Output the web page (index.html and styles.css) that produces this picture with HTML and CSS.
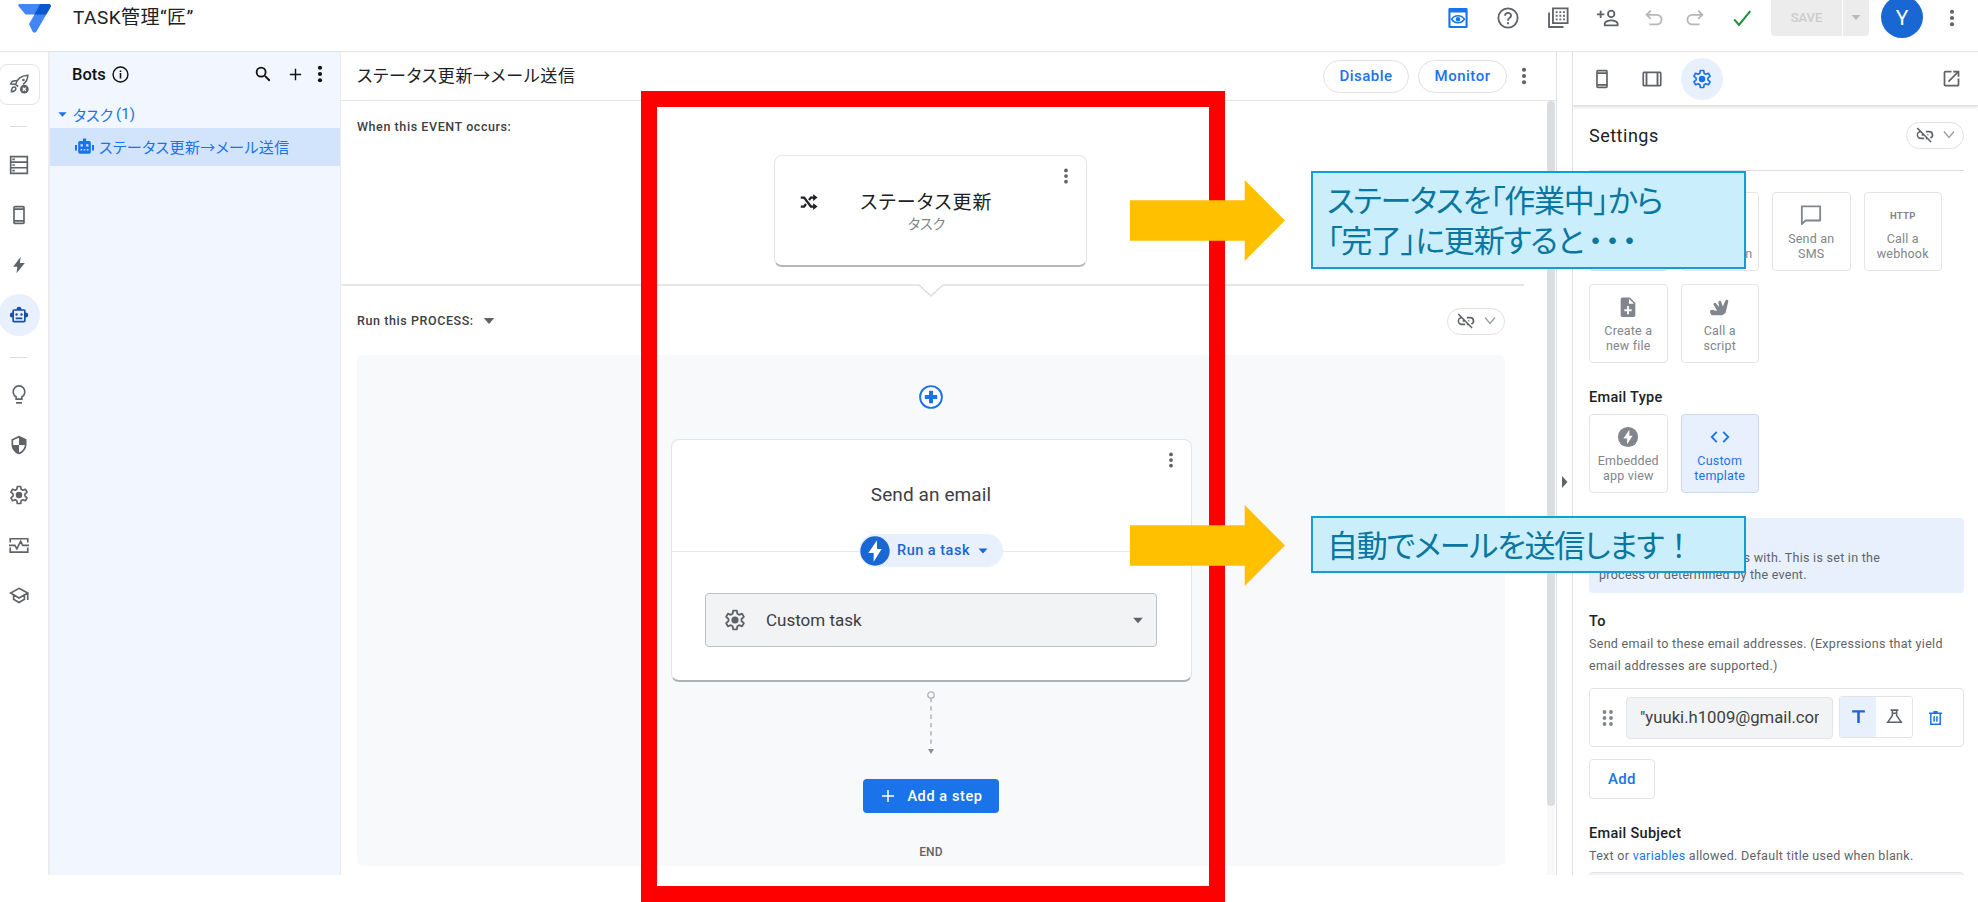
FILE: index.html
```html
<!DOCTYPE html>
<html lang="ja">
<head>
  <meta charset="UTF-8" />
  <meta name="viewport" content="width=device-width, initial-scale=1.0"/>
  <title>TASK管理“匠”</title>
  <link rel="stylesheet" href="styles.css">
</head>
<body>
  <!-- Icon sprite -->
  <svg class="sprite" xmlns="http://www.w3.org/2000/svg">
    <symbol id="more" viewBox="0 0 24 24"><circle cx="12" cy="4.5" r="2.5"/><circle cx="12" cy="12" r="2.5"/><circle cx="12" cy="19.5" r="2.5"/></symbol>
    <symbol id="gear" viewBox="0 0 24 24"><path fill="none" stroke="currentColor" stroke-width="2" stroke-linejoin="round" d="M10 1.800h4l.6 3.400 1.900 1.100 3.200-1.200 2 3.500-2.600 2.300v2.200l2.600 2.300-2 3.500-3.200-1.200-1.900 1.100-.6 3.400h-4l-.6-3.400-1.900-1.100-3.200 1.200-2-3.500 2.600-2.300v-2.200L2.300 8.600l2-3.500 3.200 1.200 1.900-1.100z"/><circle cx="12" cy="12" r="3.900"/></symbol>
    <symbol id="phone" viewBox="0 0 24 24"><path d="M17 1H7a2 2 0 0 0-2 2v18c0 1.100.9 2 2 2h10a2 2 0 0 0 2-2V3a2 2 0 0 0-2-2zM7 3h10v1H7zm10 15H7V6h10zM7 21v-1h10v1z"/></symbol>
    <symbol id="bolt" viewBox="0 0 24 24"><path d="M14 2 5 14h5l-1 8 10-12.500h-6z"/></symbol>
    <symbol id="bot" viewBox="0 0 24 24"><path d="M20 9V7a2 2 0 0 0-2-2h-3a3 3 0 0 0-6 0H6a2 2 0 0 0-2 2v2a3 3 0 0 0 0 6v4c0 1.100.9 2 2 2h12a2 2 0 0 0 2-2v-4a3 3 0 0 0 0-6zm-2 10H6V7h12zM9 13a1.500 1.500 0 1 1 0-3 1.500 1.500 0 0 1 0 3zm6 0a1.500 1.500 0 1 1 0-3 1.500 1.500 0 0 1 0 3zm-7 2h8v2H8z"/></symbol>
    <symbol id="bot-fill" viewBox="0 0 24 24"><path fill-rule="evenodd" d="M20 9V7a2 2 0 0 0-2-2h-4V2h-4v3H6a2 2 0 0 0-2 2v12c0 1.100.9 2 2 2h12a2 2 0 0 0 2-2zM7 9h3v3H7zm7 0h3v3h-3zm-7 6h2v2H7zm4 0h2v2h-2zm4 0h2v2h-2zM0 10h2.500v7H0zM21.500 10H24v7h-2.500z"/></symbol>
    <symbol id="unlink" viewBox="0 0 24 24"><path d="M17 7h-4v1.900h4a3.100 3.100 0 0 1 .7 6.100l1.500 1.500A5 5 0 0 0 17 7zm-1 4h-2.200l2 2h.2zM2 4.300l3.100 3.100A5 5 0 0 0 7 17h4v-1.900H7a3.100 3.100 0 0 1-.3-6.200L8.700 11H8v2h2.700l2.300 2.300V17h1.700l4 4 1.300-1.300L3.400 3z"/></symbol>
    <symbol id="chev" viewBox="0 0 24 24"><path fill="none" stroke="currentColor" stroke-width="2.800" d="m2 5 10 12L22 5"/></symbol>
    <symbol id="plus" viewBox="0 0 24 24"><path d="M20 13h-7v7h-2v-7H4v-2h7V4h2v7h7z"/></symbol>
    <symbol id="offbolt" viewBox="0 0 24 24"><circle cx="12" cy="12" r="11"/><path fill="#fff" d="M13.500 4 7 13.500h4V20l6-9.500h-3.500z"/></symbol>
    <symbol id="undo" viewBox="0 0 24 24"><path fill="none" stroke="currentColor" stroke-width="2" d="M8.500 4 4 8.500 8.500 13M4.500 8.500H15a5 5 0 0 1 0 10.500H7"/></symbol>
    <symbol id="drop" viewBox="0 0 24 24"><path d="M3 7h18l-9 10z"/></symbol>
  </svg>

  <header class="topbar">
    <svg class="logo" viewBox="0 0 33 29"><path fill="#4285f4" d="M1.500 0H31a2 2 0 0 1 1.700 2.800L18.500 27.600a2.300 2.300 0 0 1-4 0L11 20l5.500-9.500H7.500L.4 2A1.300 1.300 0 0 1 1.500 0z"/><path fill="#0b57d0" d="M22 0h9a2 2 0 0 1 1.700 2.800L28.300 10.500H16.500z"/></svg>
    <div class="app-name">TASK管理“匠”</div>
    <div class="tools">
      <svg class="blue tool" viewBox="0 0 24 24"><path fill-rule="evenodd" d="M3 1h18a1.500 1.500 0 0 1 1.500 1.500v19A1.500 1.500 0 0 1 21 23H3a1.500 1.500 0 0 1-1.500-1.500v-19A1.500 1.500 0 0 1 3 1zm.8 5v14.700h16.400V6z"/><path fill="none" stroke="currentColor" stroke-width="1.700" d="M5 13.300c3-5.100 11-5.100 14 0-3 5.100-11 5.100-14 0z"/><circle cx="12" cy="13.300" r="2.500"/></svg>
      <svg class="tool" viewBox="0 0 24 24"><circle cx="12" cy="12" r="10.500" fill="none" stroke="currentColor" stroke-width="2"/><path fill="none" stroke="currentColor" stroke-width="2.100" d="M8.800 9.500c0-4.300 6.600-4 6.500 0 0 2.200-3.300 2.600-3.300 5.400M12 16.500v2.200"/></svg>
      <svg class="tool" viewBox="0 0 24 24"><path fill="none" stroke="currentColor" stroke-width="2" d="M6.500 1.500h16v16h-16zM2.200 6v15.800H18"/><path fill="none" stroke="currentColor" stroke-width="2" stroke-dasharray="2 2" d="M9.500 5.500h11M9.500 9.500h11M9.500 13.500h11"/></svg>
      <svg class="tool" viewBox="0 0 24 24"><path d="M15.500 12a4.500 4.500 0 1 0 0-9 4.500 4.500 0 0 0 0 9zm0-7a2.500 2.500 0 1 1 0 5 2.500 2.500 0 0 1 0-5zm0 8.500c-3 0-8 1.500-8 4.500v3h16v-3c0-3-5-4.500-8-4.500zm-6 5.500v-1c.4-1.200 3.200-2.500 6-2.500s5.600 1.300 6 2.500v1zM5 12V9h3V7H5V4H3v3H0v2h3v3z"/></svg>
      <svg class="tool faded undo"><use href="#undo"/></svg>
      <svg class="tool faded redo"><use href="#undo"/></svg>
      <svg class="tool green" viewBox="0 0 24 24"><path fill="none" stroke="currentColor" stroke-width="2.200" d="m3.500 13.500 5.200 6L21 4.500"/></svg>
    </div>
    <div class="save"><span>SAVE</span><span class="save-drop"><svg><use href="#drop"/></svg></span></div>
    <div class="avatar">Y</div>
    <svg class="dots"><use href="#more"/></svg>
  </header>

  <div class="workspace">
    <nav class="rail">
      <div class="rail-box"><svg viewBox="0 0 24 24"><g fill="none" stroke="currentColor" stroke-width="1.800"><path d="M7.500 13C9 7 14 3 21.500 2.500 21.500 7 19.500 10.500 16 13M7.500 13l3 2.500M9 8.500l-5 .8-2 3.200 5.500.5"/><path d="M2.800 21.500c0-3 .5-5.500 3-5.500s2.800 3 .5 4.300c-1 .7-2.200 1-3.500 1.200z"/></g><circle cx="16.500" cy="8" r="1.500"/><circle cx="17.500" cy="18.500" r="5"/><path stroke="#fff" stroke-width="1.500" d="m15.700 16.700 3.600 3.600m0-3.600-3.600 3.600"/></svg></div>
      <hr>
      <div class="rail-item"><svg viewBox="0 0 24 24"><path fill="none" stroke="currentColor" stroke-width="2" d="M2 2h20v20H2zM2 8.600h20M2 15.300h20M4 5.300h3M4 12h3M4 18.700h3"/></svg></div>
      <div class="rail-item"><svg><use href="#phone"/></svg></div>
      <div class="rail-item"><svg><use href="#bolt"/></svg></div>
      <div class="rail-item active"><svg><use href="#bot"/></svg></div>
      <hr class="second">
      <div class="rail-item"><svg viewBox="0 0 24 24"><path fill="none" stroke="currentColor" stroke-width="2" d="M8.500 17v-2.800a7 7 0 1 1 7 0V17zM8.500 21.500h7"/></svg></div>
      <div class="rail-item"><svg viewBox="0 0 24 24"><path d="M12 1 3 5v6c0 5.600 3.800 10.700 9 12 5.200-1.300 9-6.400 9-12V5zm0 2.200V12h7c-.5 4.100-3.300 7.800-7 8.900V12H5V6.300z"/></svg></div>
      <div class="rail-item"><svg><use href="#gear"/></svg></div>
      <div class="rail-item"><svg viewBox="0 0 24 24"><path fill="none" stroke="currentColor" stroke-width="2" d="M1.500 9V4.500h21V9M1.500 15v5.500h21V15M0 12.500h7l2.500 4L14 7.500l2.500 5H24"/></svg></div>
      <div class="rail-item"><svg viewBox="0 0 24 24"><path fill="none" stroke="currentColor" stroke-width="2" d="m12 4 10.500 5.500L12 15.500 2 9.500zM5.500 12v5.200L12 21l6.500-3.800V12M22.500 9.500V18"/></svg></div>
    </nav>

    <aside class="bots">
      <div class="bots-head">
        <span>Bots</span>
        <svg class="info" viewBox="0 0 24 24"><circle cx="12" cy="12" r="10.500" fill="none" stroke="currentColor" stroke-width="2"/><path d="M10.900 10h2.200v7.500h-2.200zM10.900 6.200h2.200v2.300h-2.200z"/></svg>
        <svg class="search" viewBox="0 0 24 24"><path fill="none" stroke="currentColor" stroke-width="2.600" d="M14.500 14.500 21 21"/><circle cx="9.500" cy="9.500" r="6" fill="none" stroke="currentColor" stroke-width="2.400"/></svg>
        <svg class="add"><use href="#plus"/></svg>
        <svg class="dots"><use href="#more"/></svg>
      </div>
      <div class="group"><svg><use href="#drop"/></svg><span>タスク</span>(1)</div>
      <div class="bot-row"><svg><use href="#bot-fill"/></svg><span>ステータス更新→メール送信</span></div>
    </aside>

    <main class="editor">
      <div class="editor-head">
        <h1>ステータス更新→メール送信</h1>
        <button class="pill disable">Disable</button>
        <button class="pill">Monitor</button>
        <svg class="dots"><use href="#more"/></svg>
      </div>
      <div class="editor-body">
        <div class="flow">
          <section class="event">
            <div class="label">When this EVENT occurs:</div>
            <div class="event-card">
              <svg class="shuffle" viewBox="0 0 24 24"><path fill="none" stroke="currentColor" stroke-width="3" d="M1 6h4.500l9 12H19M1 18h4.500l2.500-3.300M12 9.300 14.500 6H19"/><path d="m17.500 1.500 6 4.500-6 4.500zM17.500 13.500l6 4.500-6 4.500z"/></svg>
              <div class="event-text">
                <div class="event-title">ステータス更新</div>
                <div class="event-sub">タスク</div>
              </div>
              <svg class="dots"><use href="#more"/></svg>
            </div>
            <svg class="notch" viewBox="0 0 1183 14"><path fill="none" stroke="#dcdee1" stroke-width="1.500" d="M0 1h578l12 11 12-11h581"/></svg>
          </section>
          <div class="process-head">
            <div class="label">Run this PROCESS:</div>
            <svg class="caret"><use href="#drop"/></svg>
            <div class="link-pill"><svg><use href="#unlink"/></svg><svg class="chev"><use href="#chev"/></svg></div>
          </div>
          <section class="process">
            <svg class="insert" viewBox="0 0 24 24"><circle cx="12" cy="12" r="10.900" fill="#fff" stroke="currentColor" stroke-width="1.900"/><path d="M10 5.800h4V10h4.200v4H14v4.200h-4V14H5.800v-4H10z"/></svg>
            <div class="step-card">
              <svg class="dots"><use href="#more"/></svg>
              <div class="step-title">Send an email</div>
              <div class="step-type">
                <div class="run"><svg class="run-icon"><use href="#offbolt"/></svg>Run a task<svg class="run-drop"><use href="#drop"/></svg></div>
              </div>
              <div class="select"><svg class="select-gear"><use href="#gear"/></svg>Custom task<svg class="select-drop"><use href="#drop"/></svg></div>
            </div>
            <svg class="connector" viewBox="0 0 12 66"><circle cx="6" cy="5" r="3.200" fill="none" stroke="#b0b3b7" stroke-width="1.300"/><path stroke="#b0b3b7" stroke-width="1.500" stroke-dasharray="4.300 4" d="M6 8v50"/><path fill="#8a8d91" d="M3 59h6l-3 5z"/></svg>
            <button class="add-step"><svg><use href="#plus"/></svg>Add a step</button>
            <div class="end">END</div>
          </section>
        </div>
        <div class="scroll"><div class="thumb"></div></div>
      </div>
    </main>

    <div class="splitter"><svg viewBox="0 0 6 12"><path d="M0 0v12l5.500-6z"/></svg></div>

    <aside class="side">
      <div class="side-tabs">
        <div class="tab"><svg><use href="#phone"/></svg></div>
        <div class="tab"><svg viewBox="0 0 24 24"><path fill-rule="evenodd" d="M2.500 3h19A2 2 0 0 1 23.500 5v14a2 2 0 0 1-2 2h-19a2 2 0 0 1-2-2V5a2 2 0 0 1 2-2zM6.500 5v14h11V5zM2.500 5v14h1.800V5zM19.700 5v14h1.800V5z"/></svg></div>
        <div class="tab on"><svg><use href="#gear"/></svg></div>
        <svg class="open" viewBox="0 0 24 24"><path d="M19 19H5V5h7V3H5a2 2 0 0 0-2 2v14c0 1.100.9 2 2 2h14a2 2 0 0 0 2-2v-7h-2zM14 3v2h3.600l-9.800 9.800 1.400 1.400L19 6.400V10h2V3z"/></svg>
      </div>
      <div class="side-body">
        <div class="settings-head">
          <h2>Settings</h2>
          <div class="link-pill"><svg><use href="#unlink"/></svg><svg class="chev"><use href="#chev"/></svg></div>
        </div>
        <div class="tiles">
          <div class="tile on"></div>
          <div class="tile"><i></i><br>notification</div>
          <div class="tile"><svg viewBox="0 0 24 24"><path fill="none" stroke="currentColor" stroke-width="2" stroke-linejoin="round" d="M2 2.500h20v15.500H6l-4 4z"/></svg>Send an<br>SMS</div>
          <div class="tile"><b>HTTP</b>Call a<br>webhook</div>
          <div class="tile"><svg viewBox="0 0 24 24"><path fill-rule="evenodd" d="M6 1.500h8l6 6V21a2 2 0 0 1-2 2H6a2 2 0 0 1-2-2V3.500a2 2 0 0 1 2-2zM13 3v5.500h5.500zM11 11v3.500H8v2h3V20h2v-3.500h3v-2h-3V11z"/></svg>Create a<br>new file</div>
          <div class="tile"><svg viewBox="0 0 24 24"><path d="M3 15.500 9 16 5 9.500a1.600 1.600 0 0 1 2.600-1.700L11 12l-.8-5.500a1.600 1.600 0 0 1 3-.6l1.800 5.600L18 5a1.600 1.600 0 0 1 3 1l-1.500 6.500-1.500 6-3.500 2.500H4a2 2 0 0 1-1.500-3.300z"/><circle cx="3.500" cy="17.500" r="2.500"/></svg>Call a<br>script</div>
        </div>
        <h3 class="type-title">Email Type</h3>
        <div class="tiles">
          <div class="tile"><svg><use href="#offbolt"/></svg>Embedded<br>app view</div>
          <div class="tile on"><svg viewBox="0 0 24 24"><path fill="none" stroke="currentColor" stroke-width="2" d="M8.500 6.500 3 12l5.500 5.500M15.500 6.500 21 12l-5.500 5.500"/></svg>Custom<br>template</div>
        </div>
        <div class="note"><p>The table this event starts with. This is set in the<br>process or determined by the event.</p></div>
        <h3>To</h3>
        <p class="help">Send email to these email addresses. (Expressions that yield email addresses are supported.)</p>
        <div class="address">
          <svg class="drag" viewBox="0 0 12 18"><circle cx="2.500" cy="3" r="1.900"/><circle cx="9" cy="3" r="1.900"/><circle cx="2.500" cy="9" r="1.900"/><circle cx="9" cy="9" r="1.900"/><circle cx="2.500" cy="15" r="1.900"/><circle cx="9" cy="15" r="1.900"/></svg>
          <div class="field"><span>"yuuki.h1009@gmail.com"</span></div>
          <div class="mode"><div class="on"><svg viewBox="0 0 24 24"><path d="M3 3h18v3.400h-7.200V21h-3.600V6.400H3z"/></svg></div><div><svg viewBox="0 0 24 24"><path fill="none" stroke="currentColor" stroke-width="2.200" d="M6.500 3h11M9 3v7.500L2.500 20h19L15 10.500V3M9 7.500h6"/></svg></div></div>
          <svg class="trash" viewBox="0 0 24 24"><path fill="none" stroke="currentColor" stroke-width="2.400" d="M4.500 5v17h15V5M1.500 4.500h21M8.500 2h7M9.800 9v9M14.200 9v9"/></svg>
        </div>
        <button class="add-address">Add</button>
        <h3>Email Subject</h3>
        <p class="help">Text or <a>variables</a> allowed. Default title used when blank.</p>
        <div class="subject"></div>
      </div>
    </aside>
  </div>

  <!-- Annotations on top of the editor -->
  <div class="frame"></div>
  <div class="arrow arrow-1"></div>
  <div class="arrow arrow-2"></div>
  <div class="callout callout-1"><span class="tight">ステータスを「作業中」から</span><br><span class="tight">「完了」に更新すると</span><span class="full">・・・</span></div>
  <div class="callout callout-2"><span class="tight">自動でメールを送信します</span><span class="full">！</span></div>
</body>
</html>
```
FILE: styles.css
```css
* {
  box-sizing: border-box;
}

body {
  margin: 0;
  height: 902px;
  overflow: hidden;
  position: relative;
  background: #fff;
  color: #202124;
  font-family: Roboto, "Noto Sans CJK JP", sans-serif;
  font-feature-settings: "palt";
}

svg {
  fill: currentColor;
  flex: none;
  display: block;
}

.sprite {
  position: absolute;
  width: 0;
  height: 0;
}

h1, h2, h3, p {
  margin: 0;
}

button {
  font-family: inherit;
  padding: 0;
}

.dots {
  width: 20px;
  height: 20px;
  color: #5f6368;
}

/* top bar */
.topbar {
  height: 52px;
  border-bottom: 1px solid #e4e5e7;
  display: flex;
  align-items: flex-start;
  padding-left: 18px;
}

.logo {
  width: 33px;
  height: 29px;
  margin-top: 4px;
}

.app-name {
  margin-left: 22px;
  font-size: 19px;
  line-height: 36px;
  letter-spacing: .45px;
}

.tools {
  margin-left: auto;
  display: flex;
  gap: 28px;
  height: 36px;
  align-items: center;
  color: #5f6368;
}

.tool {
  width: 22px;
  height: 22px;
}

.tools .undo {
  margin-left: -4px;
}

.tools .redo {
  transform: scaleX(-1);
  margin-left: -9px;
}

.tools .green {
  margin-left: -3px;
}

.blue { color: #1a73e8; }
.green { color: #1e8e3e; }
.faded { color: #b4b7ba; }

.save {
  display: flex;
  width: 98px;
  height: 36px;
  margin-left: 18px;
  background: #ececec;
  border-radius: 0 0 4px 4px;
  color: #cbcccd;
  font-size: 13px;
  font-weight: 500;
  line-height: 35px;
}

.save span:first-child {
  width: 71px;
  text-align: center;
}

.save-drop {
  flex: 1;
  border-left: 1px solid #fff;
  padding: 11px 7px;
}

.save-drop svg {
  width: 12px;
  height: 13px;
  color: #b9bbbd;
}

.avatar {
  width: 42px;
  height: 42px;
  margin: -4px 0 0 12px;
  border-radius: 50%;
  background: #1967d2;
  color: #fff;
  text-align: center;
  font-size: 21px;
  line-height: 44px;
}

.topbar .dots {
  margin: 8px 16px 0 19px;
}

/* columns */
.workspace {
  display: flex;
  height: 823px;
}

.rail {
  width: 50px;
  border-right: 2px solid #ececee;
  padding-top: 12px;
  color: #5f6368;
}

.rail-box {
  width: 41px;
  height: 41px;
  margin-left: -1px;
  border: 1px solid #e4e5e7;
  border-radius: 8px;
  padding: 8px 9px;
}

.rail-box svg {
  width: 21px;
  height: 21px;
}

.rail hr {
  width: 17px;
  height: 1px;
  margin: 21px 0 17px 10px;
  border: 0;
  background: #dadce0;
}

.rail hr.second {
  margin: 21px 0 16px 10px;
}

.rail-item {
  width: 42px;
  height: 42px;
  margin: 0 0 8px -2px;
  border-radius: 50%;
  display: flex;
  align-items: center;
  justify-content: center;
}

.rail-item svg {
  width: 20px;
  height: 20px;
}

.rail-item.active {
  background: #e8f0fe;
  color: #174ea6;
}

.bots {
  width: 290px;
  background: #f2f6fe;
}

.bots-head {
  display: flex;
  align-items: center;
  height: 46px;
  padding: 0 10px 2px 22px;
  font-size: 16.500px;
  font-weight: 500;
  color: #111;
}

.bots-head .info {
  width: 17px;
  height: 17px;
  margin-left: 6px;
}

.bots-head .search {
  width: 18px;
  height: 18px;
  margin-left: auto;
}

.bots-head .add {
  width: 17px;
  height: 17px;
  margin: 0 6px 0 15px;
}

.bots-head .dots {
  color: #111;
}

.group {
  height: 30px;
  display: flex;
  align-items: center;
  color: #1a73e8;
  font-size: 15px;
  padding: 2px 0 0 5px;
}

.group svg {
  width: 11px;
  height: 11px;
  margin: 0 5px 0 2px;
}

.group span {
  margin-right: 3px;
}

.bot-row {
  height: 38px;
  display: flex;
  align-items: center;
  background: #d2e3fc;
  color: #1a73e8;
  padding: 0 0 2px 25px;
  font-size: 15px;
  letter-spacing: .4px;
}

.bot-row svg {
  width: 19px;
  height: 19px;
  margin-right: 5px;
}

/* editor */
.editor {
  width: 1217px;
  border-left: 1px solid #ebecee;
  border-right: 1px solid #dcdfe3;
}

.editor-head {
  height: 49px;
  display: flex;
  align-items: center;
  border-bottom: 1px solid #e2e3e5;
  padding: 0 22px 0 16px;
}

.editor-head h1 {
  padding-bottom: 4px;
  font-size: 17px;
  font-weight: 400;
  letter-spacing: .65px;
}

.pill {
  width: 89px;
  height: 33px;
  margin-right: 7px;
  border: 1px solid #dfe1e5;
  border-radius: 17px;
  background: #fff;
  color: #1a73e8;
  font-size: 15px;
  font-weight: 500;
  letter-spacing: .5px;
}

.pill.disable {
  margin: 0 9px 0 auto;
  width: 86px;
}

.editor-body {
  display: flex;
  height: 774px;
}

.flow {
  width: 1206px;
  height: 100%;
}

.label {
  font-size: 12.500px;
  font-weight: 500;
  letter-spacing: .58px;
  line-height: 16px;
  color: #3c4043;
}

.event {
  height: 198px;
  padding-top: 18px;
}

.event .label {
  margin-left: 16px;
}

.event-card {
  width: 313px;
  height: 112px;
  margin: 20px 0 0 433px;
  display: flex;
  border: 1px solid #e5e6e8;
  border-bottom: 2px solid #b5b7ba;
  border-radius: 8px;
}

.shuffle {
  width: 18px;
  height: 18px;
  margin: 37px 0 0 25px;
}

.event-text {
  width: 151px;
  margin: 33px 0 0 33px;
  text-align: center;
}

.event-title {
  font-size: 19px;
  line-height: 27px;
  letter-spacing: 1.1px;
}

.event-sub {
  font-size: 14px;
  line-height: 17px;
  color: #80868b;
}

.event-card .dots {
  width: 18px;
  height: 18px;
  margin: 11px 11px 0 auto;
}

.notch {
  width: 1183px;
  height: 14px;
  margin-top: 17px;
}

.process-head {
  height: 57px;
  margin-top: -1px;
  display: flex;
  align-items: center;
  padding: 0 42px 11px 16px;
}

.caret {
  width: 14px;
  height: 14px;
  margin-left: 8px;
  color: #5f6368;
}

.link-pill {
  width: 58px;
  height: 27px;
  margin-left: auto;
  border: 1px solid #dfe1e5;
  border-radius: 14px;
  display: flex;
  align-items: center;
  justify-content: center;
  gap: 8px;
  color: #5f6368;
}

.link-pill svg {
  width: 20px;
  height: 20px;
}

.link-pill .chev {
  width: 12px;
  height: 12px;
  color: #9aa0a6;
}

.process {
  width: 1148px;
  height: 511px;
  margin-left: 16px;
  background: #f8f9fb;
  border-radius: 6px;
  display: flex;
  flex-direction: column;
  align-items: center;
  padding-top: 30px;
}

.insert {
  width: 24px;
  height: 24px;
  color: #1a73e8;
}

.step-card {
  width: 521px;
  height: 243px;
  margin-top: 30px;
  background: #fff;
  border: 1px solid #e2e4e7;
  border-bottom: 2px solid #adb0b3;
  border-radius: 8px;
}

.step-card > .dots {
  width: 18px;
  height: 18px;
  margin: 11px 11px 0 auto;
}

.step-title {
  margin-top: 12px;
  text-align: center;
  font-size: 19px;
  line-height: 28px;
  letter-spacing: .1px;
  color: #3c4043;
}

.step-type {
  height: 33px;
  margin-top: 25px;
  display: flex;
  justify-content: center;
  background: linear-gradient(#e6e8ea, #e6e8ea) 0 17px / 100% 1px no-repeat;
}

.run {
  width: 144px;
  border-radius: 17px;
  background: #e8f0fe;
  color: #1967d2;
  display: flex;
  align-items: center;
  font-size: 14.500px;
  font-weight: 500;
  letter-spacing: .5px;
}

.run-icon {
  width: 32px;
  height: 32px;
  margin-right: 6px;
}

.run-drop {
  width: 12px;
  height: 14px;
  margin-left: 7px;
}

.select {
  width: 452px;
  height: 54px;
  margin: 26px auto 0;
  border: 1px solid #bdc1c6;
  border-radius: 4px;
  background: #f1f3f4;
  color: #3c4043;
  font-size: 17px;
  display: flex;
  align-items: center;
}

.select-gear {
  width: 22px;
  height: 22px;
  margin: 0 20px 0 18px;
  color: #5f6368;
}

.select-drop {
  width: 14px;
  height: 13px;
  margin: 0 11px 0 auto;
  color: #5f6368;
}

.connector {
  width: 12px;
  height: 66px;
  margin-top: 8px;
}

.add-step {
  width: 136px;
  height: 34px;
  margin-top: 23px;
  border: 0;
  border-radius: 4px;
  background: #1a73e8;
  color: #fff;
  font-size: 14.500px;
  font-weight: 500;
  letter-spacing: .6px;
  display: flex;
  align-items: center;
  justify-content: center;
}

.add-step svg {
  width: 18px;
  height: 18px;
  margin-right: 10px;
}

.end {
  margin-top: 31px;
  font-size: 12px;
  line-height: 16px;
  font-weight: 500;
  letter-spacing: .2px;
  color: #5f6368;
}

.scroll {
  width: 8px;
  background: #f8f8f9;
}

.thumb {
  height: 705px;
  border-radius: 4px;
  background: #dadce0;
}

.splitter {
  width: 15px;
  display: flex;
  align-items: center;
  padding: 37px 0 0 5px;
  color: #5f6368;
}

.splitter svg {
  width: 6px;
  height: 12px;
}

/* settings side panel */
.side {
  flex: 1;
  border-left: 1px solid #dcdfe3;
  overflow: hidden;
}

.side-tabs {
  height: 54px;
  display: flex;
  align-items: center;
  padding: 0 16px 0 8px;
  gap: 8px;
  border-bottom: 1px solid #dfe2e3;
  box-shadow: 0 1px 3px rgba(60, 64, 67, .2);
  color: #5f6368;
}

.tab {
  width: 42px;
  height: 42px;
  border-radius: 50%;
  display: flex;
  align-items: center;
  justify-content: center;
}

.tab svg {
  width: 20px;
  height: 20px;
}

.tab.on {
  background: #e8f0fe;
  color: #1a73e8;
}

.open {
  width: 21px;
  height: 21px;
  margin-left: auto;
}

.side-body {
  padding: 0 14px 0 16px;
}

.settings-head {
  height: 65px;
  display: flex;
  align-items: center;
  padding-bottom: 6px;
  border-bottom: 1px solid #dadce0;
}

.settings-head h2 {
  font-size: 18px;
  font-weight: 400;
  letter-spacing: .5px;
}

.tiles {
  display: flex;
  flex-wrap: wrap;
  gap: 13px;
  padding-top: 21px;
}

.tile {
  width: 78.500px;
  height: 79px;
  border: 1px solid #e2e4e7;
  border-radius: 4px;
  display: flex;
  flex-direction: column;
  align-items: center;
  padding-top: 11px;
  text-align: center;
  font-size: 12.500px;
  line-height: 15px;
  letter-spacing: .2px;
  color: #80868b;
}

.tile svg, .tile i, .tile b {
  width: 22px;
  height: 22px;
  margin-bottom: 5px;
}

.tile b {
  width: auto;
  font-size: 9.500px;
  line-height: 23px;
  letter-spacing: .3px;
}

.tile.on {
  background: #e8f0fe;
  border-color: #cdd9ec;
  color: #1a73e8;
}

h3 {
  font-size: 14.500px;
  font-weight: 500;
  line-height: 18px;
  letter-spacing: .3px;
}

.type-title {
  margin-top: 26px;
}

.type-title + .tiles {
  padding-top: 7px;
}

.note {
  height: 75px;
  margin: 25px 0 20px;
  padding: 31px 0 0 10px;
  background: #e8f0fe;
  border-radius: 4px;
  font-size: 12.500px;
  line-height: 17px;
  letter-spacing: .27px;
  color: #5f6368;
}

.help {
  margin-top: 2px;
  font-size: 12.500px;
  line-height: 22px;
  letter-spacing: .3px;
  color: #5f6368;
}

.help a {
  color: #1a73e8;
}

.address {
  height: 59px;
  margin: 11px 0 12px;
  border: 1px solid #e2e4e7;
  border-radius: 4px;
  display: flex;
  align-items: center;
  padding: 0 20px 0 12px;
}

.drag {
  width: 12px;
  height: 18px;
  color: #80868b;
}

.field {
  width: 207px;
  height: 42px;
  margin: 0 6px 0 12px;
  border: 1px solid #e2e4e7;
  border-radius: 4px;
  background: #f1f3f4;
  padding: 0 13px;
  font-size: 16.700px;
  line-height: 40px;
  color: #3c4043;
}

.field span {
  display: block;
  overflow: hidden;
  white-space: nowrap;
}

.mode {
  width: 75px;
  height: 42px;
  margin-top: -2px;
  display: flex;
  border: 1px solid #e2e4e7;
  border-radius: 3px;
  color: #5f6368;
}

.mode div {
  flex: 1;
  display: flex;
  align-items: center;
  justify-content: center;
}

.mode .on {
  background: #e8f0fe;
  color: #1967d2;
}

.mode svg {
  width: 17px;
  height: 17px;
}

.trash {
  width: 15px;
  height: 16px;
  margin-left: 15px;
  color: #1a73e8;
}

.add-address {
  display: block;
  width: 66px;
  height: 40px;
  margin-bottom: 26px;
  border: 1px solid #e2e4e7;
  border-radius: 4px;
  background: #fff;
  color: #1a73e8;
  font-size: 15px;
  font-weight: 500;
  letter-spacing: .3px;
}

.subject {
  height: 40px;
  margin-top: 5px;
  border: 1px solid #e2e4e7;
  border-radius: 4px;
  background: #f1f3f4;
}

/* annotations */
.frame {
  position: absolute;
  left: 641px;
  top: 91px;
  width: 584px;
  height: 811px;
  border: 16px solid #f00;
}

.arrow {
  position: absolute;
  left: 1130px;
  width: 155px;
  height: 81px;
  background: #ffc000;
  clip-path: polygon(0 25%, 74% 25%, 74% 0, 100% 50%, 74% 100%, 74% 75%, 0 75%);
}

.arrow-1 { top: 180px; }
.arrow-2 { top: 505px; }

.callout {
  position: absolute;
  left: 1311px;
  width: 435px;
  padding: 9px 14px;
  border: 2px solid #0f9ed5;
  background: #caeefb;
  color: #0b769f;
  font-size: 31px;
  line-height: 40px;
  white-space: nowrap;
}

.callout .tight {
  letter-spacing: -1.200px;
}

.callout .full {
  font-feature-settings: normal;
  letter-spacing: -14px;
}

.callout-1 {
  top: 171px;
  height: 98px;
}

.callout-1 .full {
  margin-left: -3px;
}

.callout-2 {
  top: 516px;
  height: 57px;
}
```
